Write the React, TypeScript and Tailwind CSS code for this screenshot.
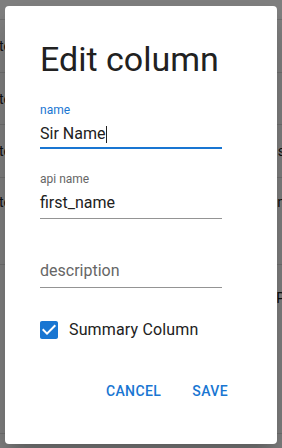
const rows = [
  { h: "h-[20px]", pad: "items-center", left: "", right: "" },
  { h: "h-[53px]", pad: "items-center", left: "te", right: "" },
  { h: "h-[52px]", pad: "items-center", left: "te", right: "" },
  { h: "h-[53px]", pad: "items-center", left: "te", right: "s" },
  { h: "h-[87px]", pad: "items-start pt-[14px]", left: "te", right: "n" },
  { h: "h-[169px]", pad: "items-start pt-[23px]", left: "", right: "P" },
];

const CheckboxIcon = () => (
  <svg viewBox="0 0 24 24" className="-m-[3px] h-[24px] w-[24px] shrink-0 fill-[#1976d2]">
    <path d="M19 3H5c-1.11 0-2 .9-2 2v14c0 1.1.89 2 2 2h14c1.11 0 2-.9 2-2V5c0-1.1-.89-2-2-2zm-9 14l-5-5 1.41-1.41L10 14.17l7.59-7.59L19 8l-9 9z" />
  </svg>
);

export default function App() {
  return (
    <div className="relative h-[448px] w-[282px] overflow-hidden bg-white font-['Roboto',sans-serif] text-[#212121]">
      {/* page behind the dialog */}
      <div className="flex flex-col">
        {rows.map((row, i) => (
          <div
            key={i}
            className={`${row.h} ${row.pad} flex justify-between border-b border-[#e0e0e0] text-[14px] leading-[20px]`}
          >
            <span className="-ml-[1px]">{row.left}</span>
            <span className="mr-[-3px]">{row.right}</span>
          </div>
        ))}
      </div>

      <div className="absolute inset-0 bg-black/50" />

      <div className="absolute left-[5px] top-[6px] flex h-[438px] w-[272px] flex-col rounded-[4px] bg-white pl-[35px] pt-[32px] shadow-[0_11px_15px_-7px_rgba(0,0,0,0.2),0_24px_38px_3px_rgba(0,0,0,0.14)]">
        <h2 className="h-[42px] text-[34px] font-normal leading-[42px] text-[#212121]">
          Edit column
        </h2>

        {/* name (focused) */}
        <div className="mt-[24px] w-[182px]">
          <div className="h-[12px] text-[12px] leading-[12px] text-[#1976d2]">name</div>
          <div className="mt-[8px] box-content flex h-[20px] items-center border-b-2 border-[#1976d2] pb-[3px] text-[16px] leading-[20px]">
            <span>Sir Name</span>
            <span className="ml-[1px] h-[17px] w-[1px] bg-[#212121]" />
          </div>
        </div>

        {/* api name */}
        <div className="mt-[24px] w-[182px]">
          <div className="h-[12px] text-[12px] leading-[12px] text-[#666666]">api name</div>
          <div className="mt-[8px] box-content h-[20px] border-b border-[#949494] pb-[5px] text-[16px] leading-[20px]">
            first_name
          </div>
        </div>

        {/* description */}
        <div className="mt-[24px] w-[182px]">
          <div className="h-[12px]" />
          <div className="mt-[6px] box-content h-[20px] border-b border-[#949494] pb-[6px] text-[16px] leading-[20px] text-[#666666]">
            description
          </div>
        </div>

        <label className="mt-[33px] flex h-[18px] items-center gap-[11px]">
          <span className="flex h-[18px] w-[18px] items-center justify-center">
            <CheckboxIcon />
          </span>
          <span className="text-[16px] leading-[20px] tracking-[0.15px]">Summary Column</span>
        </label>

        <div className="mt-[34px] flex justify-end gap-[15px] pr-[41px]">
          <button className="px-[8px] py-[6px] text-[14px] font-medium uppercase leading-[24px] tracking-[0.4px] text-[#1976d2]">
            Cancel
          </button>
          <button className="px-[8px] py-[6px] text-[14px] font-medium uppercase leading-[24px] tracking-[0.4px] text-[#1976d2]">
            Save
          </button>
        </div>
      </div>
    </div>
  );
}
